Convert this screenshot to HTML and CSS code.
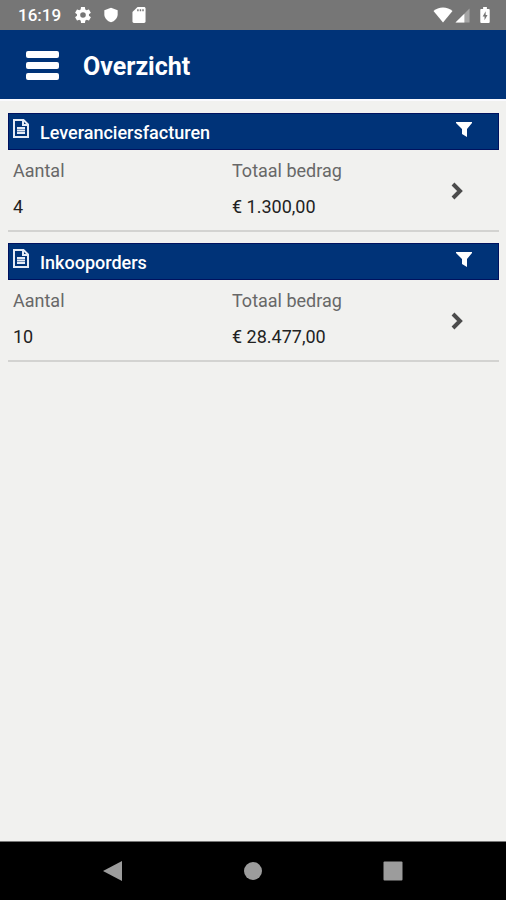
FILE: index.html
```html
<!DOCTYPE html>
<html lang="nl">
<head>
<meta charset="utf-8">
<meta name="viewport" content="width=device-width, initial-scale=1">
<title>Overzicht</title>
<link rel="stylesheet" href="styles.css">
</head>
<body>
<div class="screen">
  <div class="status">
    <span class="clock">16:19</span>
    <svg class="status-icon" viewBox="2 2 20 20" aria-hidden="true"><path d="M19.4 13c.04-.3.06-.7.06-1s-.02-.7-.06-1l2.1-1.6c.2-.2.2-.4.1-.6l-2-3.500c-.1-.2-.4-.3-.6-.2l-2.500 1c-.5-.4-1.100-.7-1.700-1L14.400 2.400c0-.2-.2-.4-.5-.4h-4c-.2 0-.4.2-.5.4L9.100 5.100c-.6.2-1.200.6-1.700 1l-2.500-1c-.2-.1-.5 0-.6.2l-2 3.500c-.1.2-.1.5.1.6L4.500 11c0 .3-.1.700-.1 1s0 .7.1 1l-2.100 1.600c-.2.2-.2.4-.1.6l2 3.500c.1.2.4.3.6.2l2.500-1c.5.4 1.100.7 1.700 1l.4 2.700c0 .2.2.4.5.4h4c.2 0 .5-.2.5-.4l.4-2.700c.6-.2 1.200-.6 1.700-1l2.500 1c.2.1.5 0 .6-.2l2-3.500c.1-.2.1-.5-.1-.6zM12 15.500a3.500 3.500 0 1 1 0-7 3.500 3.500 0 0 1 0 7z"/></svg>
    <svg class="status-icon" viewBox="0 0 24 24" aria-hidden="true"><path d="M12 1 2 5v6c0 5.800 4.500 10.600 10 12 5.500-1.400 10-6.200 10-12V5z"/></svg>
    <svg class="status-icon" viewBox="1 1 22 22" aria-hidden="true"><path d="M19 1h-9L3 8v13c0 1.100.9 2 2 2h14c1.100 0 2-.9 2-2V3c0-1.100-.9-2-2-2z"/><path class="slots" d="M9.500 4h2v3h-2zM13 4h2v3h-2zM16.500 4h2v3h-2z"/></svg>
    <div class="signals">
      <svg class="wifi" viewBox="0 0 20 16" aria-hidden="true"><path d="M10 15.500.5 4C3 1.800 6.300.5 10 .5S17 1.800 19.500 4z"/></svg>
      <svg class="cell" viewBox="0 0 16 16" aria-hidden="true"><path class="dim" d="M15.500.5v15H.5z"/><path d="M10 6v9.500H.5z"/></svg>
      <svg class="battery" viewBox="0 0 10 17" aria-hidden="true"><path d="M3 0h4v2h2c.6 0 1 .4 1 1v13c0 .6-.4 1-1 1H1c-.6 0-1-.4-1-1V3c0-.6.400-1 1-1h2z"/><path class="bolt" d="M5.700 4.500 2.500 10h2v4l3.200-5.500h-2z"/></svg>
    </div>
  </div>

  <header class="appbar">
    <button class="menu" aria-label="Menu"><span class="bar"></span><span class="bar"></span><span class="bar"></span></button>
    <h1 class="title">Overzicht</h1>
  </header>

  <main class="content">
    <section class="card">
      <div class="card-head">
        <svg class="doc" viewBox="0 0 16 19" aria-hidden="true"><path d="M1 1h9.500L15 5.500V18H1z"/><path d="M10 1v5h5M4 9h8M4 11.500h8M4 14h8"/></svg>
        <h2 class="card-title">Leveranciersfacturen</h2>
        <button class="filter" aria-label="Filter leveranciersfacturen"><svg class="funnel" viewBox="0 0 16 15" aria-hidden="true"><path d="M0 0h16v1l-5 6V15l-5-3V7L0 1z"/></svg></button>
      </div>
      <a class="card-body" href="#leveranciersfacturen">
        <span class="label">Aantal</span>
        <span class="label">Totaal bedrag</span>
        <svg class="chevron" viewBox="0 0 12 18" aria-hidden="true"><path d="m2 2 7 7-7 7"/></svg>
        <span class="value">4</span>
        <span class="value">€ 1.300,00</span>
      </a>
    </section>
    <section class="card">
      <div class="card-head">
        <svg class="doc" viewBox="0 0 16 19" aria-hidden="true"><path d="M1 1h9.500L15 5.500V18H1z"/><path d="M10 1v5h5M4 9h8M4 11.500h8M4 14h8"/></svg>
        <h2 class="card-title">Inkooporders</h2>
        <button class="filter" aria-label="Filter inkooporders"><svg class="funnel" viewBox="0 0 16 15" aria-hidden="true"><path d="M0 0h16v1l-5 6V15l-5-3V7L0 1z"/></svg></button>
      </div>
      <a class="card-body" href="#inkooporders">
        <span class="label">Aantal</span>
        <span class="label">Totaal bedrag</span>
        <svg class="chevron" viewBox="0 0 12 18" aria-hidden="true"><path d="m2 2 7 7-7 7"/></svg>
        <span class="value">10</span>
        <span class="value">€ 28.477,00</span>
      </a>
    </section>
  </main>

  <nav class="navbar" aria-label="Systeem">
    <button class="nav-button" aria-label="Terug"><svg class="nav-icon" viewBox="0 0 20 20"><path d="M19 0v20L0 10z"/></svg></button>
    <button class="nav-button" aria-label="Start"><svg class="nav-icon" viewBox="0 0 20 20"><circle cx="10" cy="10" r="9"/></svg></button>
    <button class="nav-button" aria-label="Recent"><svg class="nav-icon" viewBox="0 0 20 20"><rect x=".5" y=".5" width="19" height="19" rx="1"/></svg></button>
  </nav>
</div>
</body>
</html>
```
FILE: styles.css
```css
* {
  box-sizing: border-box;
}

body {
  margin: 0;
  background: #f1f1ef;
  font-family: Roboto, "Liberation Sans", sans-serif;
  font-size: 18px;
  color: #222;
}

button {
  border: 0;
  padding: 0;
  background: none;
  cursor: pointer;
}

svg {
  display: block;
  flex: none;
}

.screen {
  display: flex;
  flex-direction: column;
  min-height: 100vh;
}

.status {
  display: flex;
  align-items: center;
  gap: 12px;
  height: 30px;
  padding: 0 16px 0 18px;
  background: #767676;
  color: #fff;
  fill: #fff;
}

.clock {
  margin-right: 2px;
  font-size: 17px;
  font-weight: 500;
}

.status-icon {
  width: 16px;
  height: 16px;
}

.slots,
.bolt {
  fill: #767676;
}

.signals {
  display: flex;
  align-items: center;
  gap: 2px;
  margin-left: auto;
}

.wifi {
  width: 20px;
  height: 16px;
}

.cell {
  width: 15px;
  height: 15px;
}

.dim {
  fill: #a5a5a5;
}

.battery {
  width: 10px;
  height: 16px;
  margin-left: 8px;
}

.appbar {
  display: flex;
  align-items: center;
  gap: 24px;
  height: 71px;
  padding: 2px 26px 0;
  background: #003378;
  border-bottom: 2px solid #fafafe;
  color: #fff;
}

.menu {
  display: grid;
  gap: 4px;
  width: 33px;
}

.bar {
  height: 7px;
  border-radius: 2px;
  background: #fff;
}

.title {
  margin: 0;
  padding-top: 2px;
  font-size: 25px;
  line-height: 32px;
  font-weight: 700;
}

.content {
  display: flex;
  flex: 1;
  flex-direction: column;
  gap: 11px;
  padding: 12px 7px 12px 8px;
}

.card {
  border-bottom: 2px solid #d3d3d1;
}

.card-head {
  display: flex;
  align-items: flex-start;
  height: 37px;
  padding: 5px 26px 0 5px;
  background: #003378;
  border: 1px solid #00125f;
  color: #fff;
}

.doc {
  width: 16px;
  height: 19px;
  margin-right: 11px;
  margin-left: -1px;
  fill: none;
  stroke: #e6ebf5;
  stroke-width: 2;
}

.card-title {
  margin: 0;
  padding-top: 2px;
  font-size: 18px;
  line-height: 24px;
  font-weight: 500;
}

.filter {
  margin-left: auto;
  padding-top: 3px;
}

.funnel {
  width: 16px;
  height: 15px;
  fill: #fff;
}

.card-body {
  display: grid;
  grid-template-columns: 1fr 1fr 48px;
  row-gap: 12px;
  align-items: center;
  padding: 9px 0 11px 5px;
  color: inherit;
  text-decoration: none;
  line-height: 24px;
}

.label {
  color: #686868;
}

.chevron {
  grid-column: 3;
  grid-row: 1 / span 2;
  width: 12px;
  height: 18px;
  margin-top: 4px;
  fill: none;
  stroke: #4c4c4c;
  stroke-width: 4;
}

.navbar {
  display: flex;
  justify-content: center;
  height: 59px;
  border-top: 1px solid #777;
  background: #000;
}

.nav-button {
  display: grid;
  place-items: center;
  width: 140px;
}

.nav-icon {
  width: 20px;
  height: 20px;
  fill: #9c9c9c;
}
```
